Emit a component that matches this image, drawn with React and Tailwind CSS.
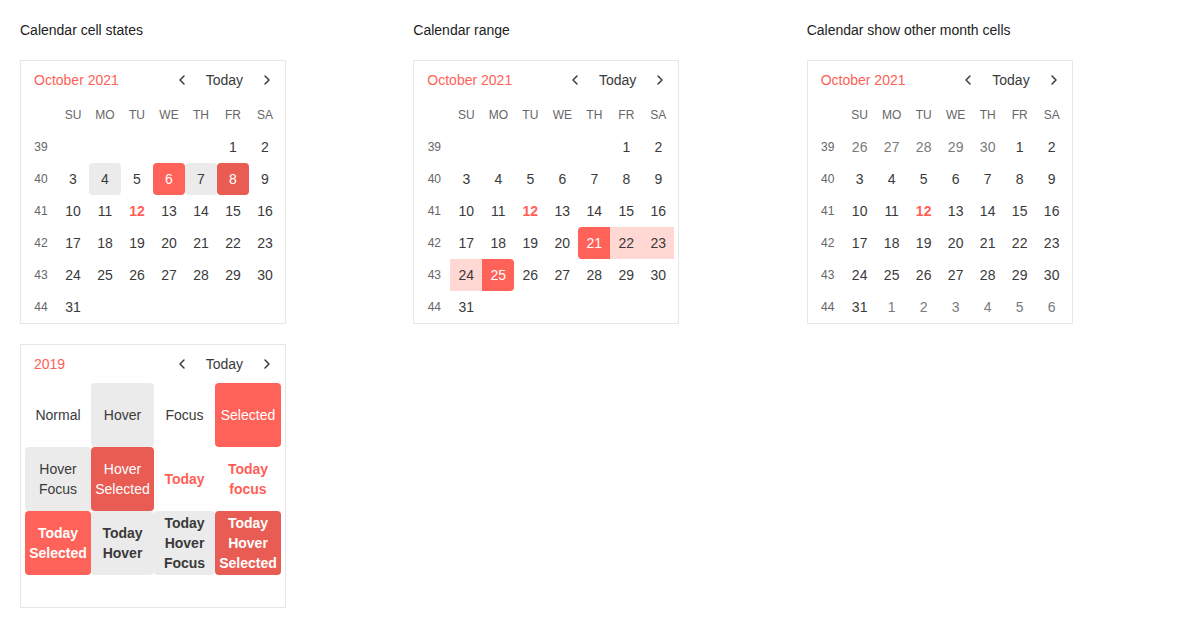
import React from "react";
import { ChevronLeft, ChevronRight } from "lucide-react";

const RED = "text-[#ff5f57]";

function Header({ title }) {
  return (
    <div className="flex h-[38px] items-center justify-between pl-[13px] pr-[6px]">
      <span className={`text-sm ${RED}`}>{title}</span>
      <div className="flex items-center text-sm text-[#3a3a3a]">
        <span className="flex w-6 justify-center">
          <ChevronLeft size={16} strokeWidth={2.2} />
        </span>
        <span className="px-3">Today</span>
        <span className="flex w-6 justify-center">
          <ChevronRight size={16} strokeWidth={2.2} />
        </span>
      </div>
    </div>
  );
}

const DAYS = ["SU", "MO", "TU", "WE", "TH", "FR", "SA"];

function buildWeeks(showOther) {
  // October 2021 starts on Friday
  const weeks = [];
  let day = 1 - 5;
  for (let w = 0; w < 6; w++) {
    const row = [];
    for (let d = 0; d < 7; d++) {
      if (day < 1) row.push(showOther ? { n: 30 + day, other: true } : null);
      else if (day > 31) row.push(showOther ? { n: day - 31, other: true } : null);
      else row.push({ n: day });
      day++;
    }
    weeks.push(row);
  }
  return weeks;
}

const stateClass = {
  hover: "bg-[#ebebeb] rounded text-[#3a3a3a]",
  selected: "bg-[#ff6258] rounded text-white",
  hoverSelected: "bg-[#e85c53] rounded text-white",
  rangeStart: "bg-[#ff6258] rounded-l text-white",
  rangeEnd: "bg-[#ff6258] rounded-r text-white",
  inRange: "bg-[#ffd8d4] text-[#3a3a3a]",
};

function Calendar({ states = {}, showOther = false }) {
  const weeks = buildWeeks(showOther);
  return (
    <div className="h-[264px] w-[266px] border border-[#e6e6e6] bg-white">
      <Header title="October 2021" />
      <div className="px-1">
        <div className="flex h-8 items-center">
          <div className="w-8" />
          {DAYS.map((d) => (
            <div key={d} className="flex h-8 w-8 items-center justify-center text-xs text-[#666]">
              {d}
            </div>
          ))}
        </div>
        {weeks.map((row, i) => (
          <div key={i} className="flex h-8 items-center">
            <div className="flex h-8 w-8 items-center justify-center text-xs text-[#666]">{39 + i}</div>
            {row.map((c, j) => {
              if (!c) return <div key={j} className="h-8 w-8" />;
              const st = !c.other ? states[c.n] : null;
              let cls = "text-[#3a3a3a]";
              if (c.other) cls = "text-[#7a7a7a]";
              else if (st === "today") cls = `${RED} font-bold`;
              else if (st) cls = stateClass[st];
              return (
                <div key={j} className={`flex h-8 w-8 items-center justify-center text-sm ${cls}`}>
                  {c.n}
                </div>
              );
            })}
          </div>
        ))}
      </div>
    </div>
  );
}

function YearCell({ children, cls = "text-[#3a3a3a]" }) {
  return (
    <div className={`flex h-16 items-center justify-center text-center text-sm leading-5 ${cls}`}>
      {children}
    </div>
  );
}

function YearStates() {
  return (
    <div className="h-[264px] w-[266px] border border-[#e6e6e6] bg-white">
      <Header title="2019" />
      <div className="grid grid-cols-[66px_63px_61px_66px] px-1">
        <YearCell>Normal</YearCell>
        <YearCell cls="bg-[#ebebeb] rounded text-[#3a3a3a]">Hover</YearCell>
        <YearCell>Focus</YearCell>
        <YearCell cls="bg-[#ff6258] rounded text-white">Selected</YearCell>

        <YearCell cls="bg-[#ebebeb] rounded text-[#3a3a3a]">Hover<br />Focus</YearCell>
        <YearCell cls="bg-[#e85c53] rounded text-white">Hover<br />Selected</YearCell>
        <YearCell cls={`${RED} font-bold`}>Today</YearCell>
        <YearCell cls={`${RED} font-bold`}>Today<br />focus</YearCell>

        <YearCell cls="bg-[#ff6258] rounded text-white font-bold">Today<br />Selected</YearCell>
        <YearCell cls="bg-[#ebebeb] rounded text-[#3a3a3a] font-bold">Today<br />Hover</YearCell>
        <YearCell cls="bg-[#ebebeb] rounded text-[#3a3a3a] font-bold">Today<br />Hover<br />Focus</YearCell>
        <YearCell cls="bg-[#e85c53] rounded text-white font-bold">Today<br />Hover<br />Selected</YearCell>
      </div>
    </div>
  );
}

export default function App() {
  return (
    <div
      className="grid h-[628px] w-[1200px] grid-cols-3 gap-5 bg-white p-5 text-[#222]"
      style={{ fontFamily: '"Liberation Sans", Arial, sans-serif' }}
    >
      <div className="flex flex-col gap-5">
        <div className="text-sm leading-5">Calendar cell states</div>
        <Calendar states={{ 4: "hover", 6: "selected", 7: "hover", 8: "hoverSelected", 12: "today" }} />
        <YearStates />
      </div>
      <div className="flex flex-col gap-5">
        <div className="text-sm leading-5">Calendar range</div>
        <Calendar
          states={{ 12: "today", 21: "rangeStart", 22: "inRange", 23: "inRange", 24: "inRange", 25: "rangeEnd" }}
        />
      </div>
      <div className="flex flex-col gap-5">
        <div className="text-sm leading-5">Calendar show other month cells</div>
        <Calendar states={{ 12: "today" }} showOther />
      </div>
    </div>
  );
}
